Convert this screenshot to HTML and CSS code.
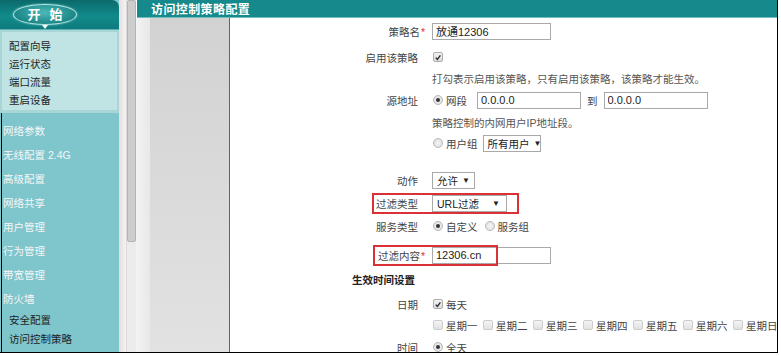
FILE: index.html
```html
<!DOCTYPE html>
<html lang="zh-CN">
<head>
<meta charset="utf-8">
<title>访问控制策略配置</title>
<link rel="stylesheet" href="styles.css">
</head>
<body>
<div class="frame">
  <aside class="side">
    <div class="side-head">
      <div class="start">开 始<span class="start-arrow"></span></div>
    </div>
    <div class="quick">
      <ul class="quick-list">
        <li>配置向导</li>
        <li>运行状态</li>
        <li>端口流量</li>
        <li>重启设备</li>
      </ul>
    </div>
    <ul class="menu">
      <li class="menu-item">网络参数</li>
      <li class="menu-item">无线配置 2.4G</li>
      <li class="menu-item">高级配置</li>
      <li class="menu-item">网络共享</li>
      <li class="menu-item">用户管理</li>
      <li class="menu-item">行为管理</li>
      <li class="menu-item">带宽管理</li>
      <li class="menu-item">防火墙</li>
      <li class="sub-item">安全配置</li>
      <li class="sub-item">访问控制策略</li>
      <li class="sub-item">连接数限制</li>
    </ul>
  </aside>
  <div class="split"></div>
  <div class="scroll"><div class="thumb"></div></div>
  <main class="main">
    <header class="titlebar">访问控制策略配置</header>
    <div class="body">
      <div class="gutter"></div>
      <div class="panel"></div>
      <section class="form">
        <div class="row">
          <span class="lbl">策略名<span class="req">*</span></span>
          <input class="field w-name" type="text" value="放通12306" readonly>
        </div>
        <div class="row gap6">
          <span class="lbl">启用该策略</span>
          <span class="cb on"><svg viewBox="0 0 10 10"><path d="M2.2 5.2 L4.2 7.4 L8 2.4"/></svg></span>
        </div>
        <div class="row gap1">
          <span class="lbl"></span>
          <span class="hint">打勾表示启用该策略，只有启用该策略，该策略才能生效。</span>
        </div>
        <div class="row">
          <span class="lbl">源地址</span>
          <span class="opt"><span class="rd on"></span>网段</span>
          <input class="field w-ip first-ip" type="text" value="0.0.0.0" readonly>
          <span class="to">到</span>
          <input class="field w-ip" type="text" value="0.0.0.0" readonly>
        </div>
        <div class="row">
          <span class="lbl"></span>
          <span class="hint">策略控制的内网用户IP地址段。</span>
        </div>
        <div class="row gap1">
          <span class="lbl"></span>
          <span class="opt"><span class="rd"></span>用户组</span>
          <span class="sel w-group">所有用户<i class="arr">▼</i></span>
        </div>
        <div class="row gap17">
          <span class="lbl">动作</span>
          <span class="sel w-act">允许<i class="arr">▼</i></span>
        </div>
        <div class="row gap3">
          <span class="lbl">过滤类型</span>
          <span class="sel w-type">URL过滤<i class="arr">▼</i></span>
          <span class="mark mark-type"></span>
        </div>
        <div class="row gap3">
          <span class="lbl">服务类型</span>
          <span class="opt"><span class="rd on"></span>自定义</span>
          <span class="opt opt-next"><span class="rd"></span>服务组</span>
        </div>
        <div class="row gap9">
          <span class="lbl">过滤内容<span class="req">*</span></span>
          <input class="field w-name" type="text" value="12306.cn" readonly>
          <span class="mark mark-content"></span>
        </div>
        <h2 class="section">生效时间设置</h2>
        <div class="row gap4">
          <span class="lbl">日期</span>
          <span class="opt"><span class="cb on"><svg viewBox="0 0 10 10"><path d="M2.2 5.2 L4.2 7.4 L8 2.4"/></svg></span>每天</span>
        </div>
        <div class="row gap1">
          <span class="lbl"></span>
          <span class="opt day"><span class="cb off"></span>星期一</span>
          <span class="opt day"><span class="cb off"></span>星期二</span>
          <span class="opt day"><span class="cb off"></span>星期三</span>
          <span class="opt day"><span class="cb off"></span>星期四</span>
          <span class="opt day"><span class="cb off"></span>星期五</span>
          <span class="opt day"><span class="cb off"></span>星期六</span>
          <span class="opt day"><span class="cb off"></span>星期日</span>
        </div>
        <div class="row">
          <span class="lbl">时间</span>
          <span class="opt"><span class="rd on"></span>全天</span>
        </div>
      </section>
    </div>
  </main>
</div>
</body>
</html>
```

FILE: styles.css
```css
* { box-sizing: border-box; margin: 0; padding: 0; }
html, body { background: #fff; }
body {
  font-family: "Liberation Sans", "Noto Sans CJK SC", sans-serif;
  font-size: 10.5px;
  color: #444;
  width: 781px;
  height: 356px;
  overflow: hidden;
}

.frame {
  display: flex;
  width: 778px;
  height: 353px;
  border-right: 1px solid #000;
  border-bottom: 1px solid #000;
  overflow: hidden;
}

/* sidebar */
.side {
  flex: 0 0 119px;
  background: #7fc5cc;
  display: flex;
  flex-direction: column;
  overflow: hidden;
}
.side-head {
  flex: 0 0 30px;
  height: 30px;
  background: linear-gradient(#0b6a6b, #128a8b 55%, #0e7c7e);
  border-top-right-radius: 7px;
  border-bottom: 1px solid #5cb0b2;
  padding: 4px 0 0 13px;
}
.start {
  position: relative;
  width: 64px;
  height: 21px;
  border-radius: 50%;
  border: 1px solid #b4e6e6;
  box-shadow: 0 0 2px #9fdcdc;
  background: radial-gradient(ellipse at 50% 40%, #4cb8b8, #16807f 80%);
  color: #fff;
  font-family: "Noto Sans CJK SC", sans-serif;
  font-weight: bold;
  font-size: 13px;
  line-height: 18px;
  text-align: center;
  letter-spacing: 3px;
  padding-left: 3px;
}
.start-arrow {
  position: absolute;
  left: 28px;
  bottom: -5px;
  border-left: 3px solid transparent;
  border-right: 3px solid transparent;
  border-top: 4px solid #fff;
}
.quick {
  flex: 0 0 83px;
  height: 83px;
  background: #a8d6d7;
  padding: 2px 2px 3px 2px;
}
.quick-list {
  list-style: none;
  height: 78px;
  background: #c0e4e3;
  padding: 5px 0 0 7px;
  line-height: 18px;
  color: #1e1e1e;
}
.menu {
  list-style: none;
  flex: 1 1 auto;
  min-height: 0;
  margin-left: 1px;
  border-left: 1px solid #000;
  padding-top: 6px;
}
.menu-item {
  line-height: 24px;
  color: #f6f6f6;
  padding-left: 1px;
}
.sub-item {
  line-height: 19px;
  color: #1e1e1e;
  padding-left: 7px;
}

.split {
  flex: 0 0 7px;
  background: linear-gradient(90deg, #e4dfdf, #f7f3f3);
}
.scroll {
  flex: 0 0 10px;
  background: #ececec;
  border-left: 1px solid #dadada;
}
.thumb {
  height: 242px;
  background: #cdcdcd;
  border: 1px solid #b4b4b4;
  border-radius: 2px;
}

/* main */
.main {
  flex: 1;
  display: flex;
  flex-direction: column;
}
.titlebar {
  flex: 0 0 18px;
  height: 18px;
  margin: 0 2px 0 1px;
  background: #15898b;
  border-bottom: 1px solid #71bcbd;
  color: #fff;
  font-family: "Noto Sans CJK SC", sans-serif;
  font-weight: bold;
  font-size: 12px;
  line-height: 17px;
  padding-left: 14px;
  letter-spacing: 0.4px;
}
.body {
  flex: 1;
  display: flex;
}
.gutter {
  flex: 0 0 14px;
  background: linear-gradient(90deg, #f3f3f3, #e8e8e8);
}
.panel {
  flex: 0 0 79px;
  background: linear-gradient(#d2d2d2, #e2e2e2);
}
.form {
  flex: 1;
  border-left: 1px solid #4e6e6e;
  padding-top: 3px;
  background: #fff;
}

/* rows */
.row {
  position: relative;
  display: flex;
  align-items: center;
  height: 20px;
  margin-top: 2px;
  white-space: nowrap;
}
.form > .row:first-child { margin-top: 0; }
.gap1 { margin-top: 1px; }
.gap3 { margin-top: 3px; }
.gap4 { margin-top: 4px; }
.gap6 { margin-top: 6px; }
.gap9 { margin-top: 9px; }
.gap17 { margin-top: 17px; }

.lbl {
  flex: 0 0 188px;
  text-align: right;
  margin-right: 14px;
  color: #444;
}
.req {
  color: #e0302f;
  padding-left: 1px;
  margin-right: -7px;
}
.hint { color: #555; }

.field {
  height: 17px;
  border: 1px solid #a9a9a9;
  padding: 0 3px;
  font-family: "Liberation Sans", "Noto Sans CJK SC", sans-serif;
  font-size: 11px;
  color: #222;
  background: #fff;
  outline: none;
}
.w-name { width: 119px; }
.w-ip { width: 104px; }
.first-ip { margin-left: 10px; }
.to { margin: 0 6px; }

.opt {
  display: inline-flex;
  align-items: center;
  gap: 3px;
}
.opt-next { margin-left: 6px; }
.day { width: 50px; }

.cb {
  display: inline-flex;
  align-items: center;
  justify-content: center;
  width: 10px;
  height: 10px;
  margin-left: 1px;
  border: 1px solid #adadad;
  border-radius: 2px;
  background: linear-gradient(#f2f2f2, #dcdcdc);
}
.cb svg { width: 9px; height: 9px; }
.cb path { fill: none; stroke: #2a2a2a; stroke-width: 1.7; }
.cb.off {
  border-color: #cdcdcd;
  background: linear-gradient(#f4f4f4, #e2e2e2);
}
.rd {
  display: inline-flex;
  align-items: center;
  justify-content: center;
  width: 10px;
  height: 10px;
  margin-left: 1px;
  border-radius: 50%;
  border: 1px solid #b8b8b8;
  background: radial-gradient(#f6f6f6, #d9d9d9);
}
.rd.on::after {
  content: "";
  width: 4px;
  height: 4px;
  border-radius: 50%;
  background: #333;
}

.sel {
  display: inline-flex;
  align-items: center;
  justify-content: space-between;
  height: 17px;
  border: 1px solid #a9a9a9;
  padding: 0 6px 0 4px;
  color: #222;
  background: #fff;
}
.arr { font-style: normal; font-size: 8px; color: #222; margin-left: 4px; }
.w-group { width: 58px; margin-left: 5px; padding-right: 4px; }
.w-act { width: 43px; }
.w-type { width: 75px; }

.mark {
  position: absolute;
  top: 0;
  height: 21px;
  border: 2px solid #db3035;
}
.mark-type { left: 142px; width: 147px; }
.mark-content { left: 143px; width: 125px; }

.section {
  height: 20px;
  line-height: 20px;
  margin-top: 5px;
  padding-left: 122px;
  font-size: 10.5px;
  font-weight: bold;
  color: #222;
}
```
